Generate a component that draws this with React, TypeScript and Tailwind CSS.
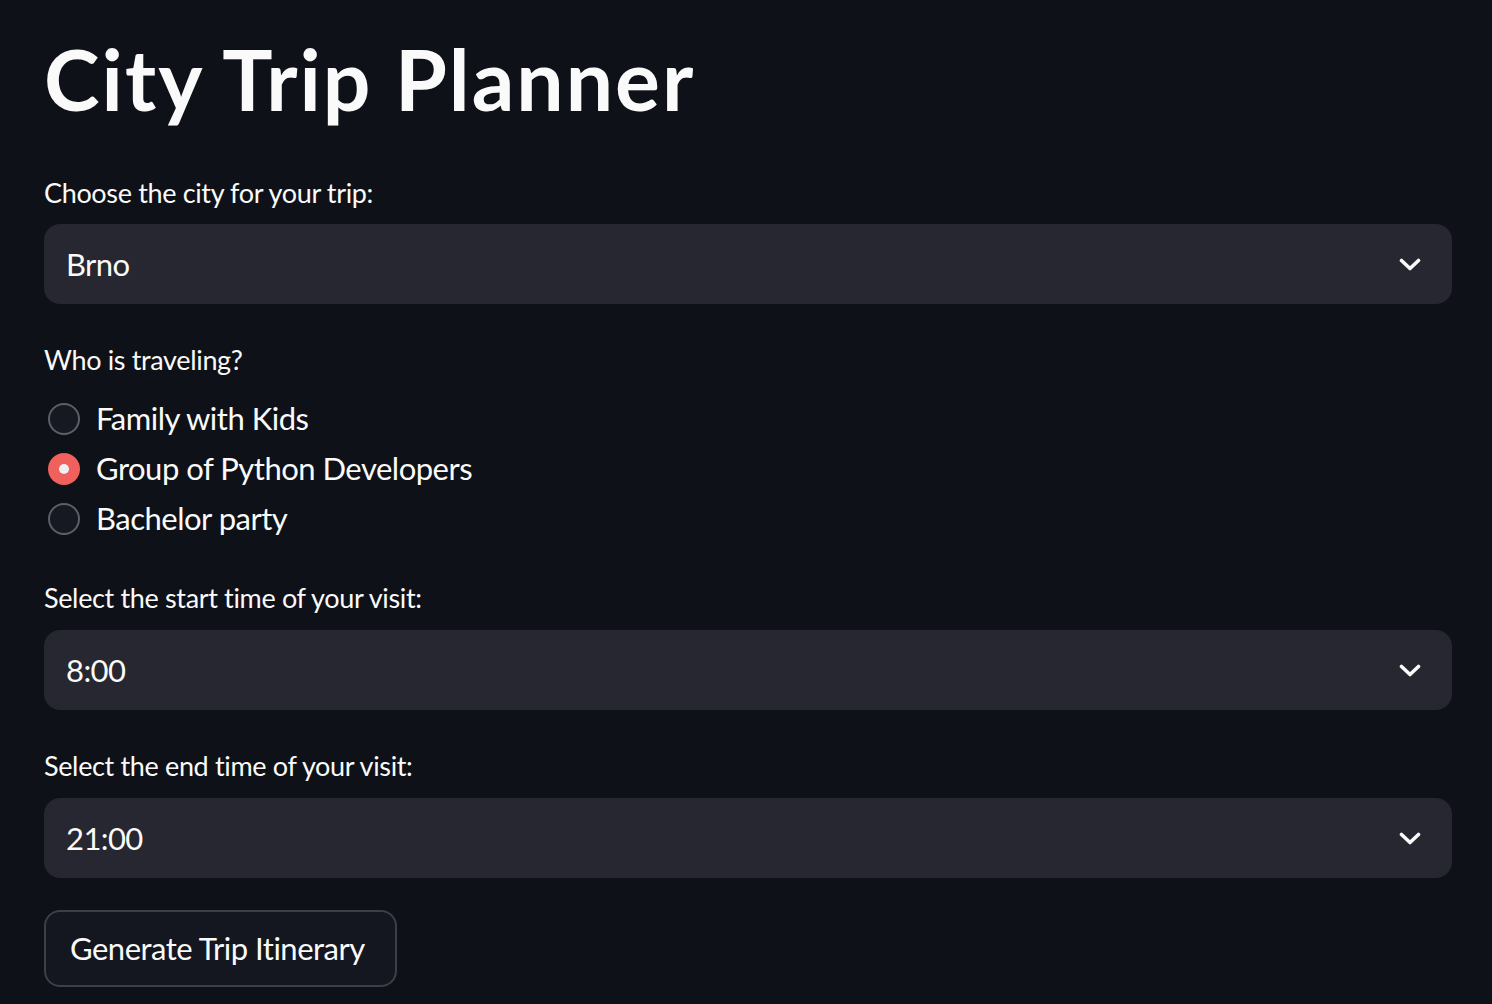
import { useState } from "react";

const cities = ["Brno"];

function Chevron() {
  return (
    <svg width="22" height="13" viewBox="0 0 22 13" fill="none">
      <polyline
        points="2.5,2.5 11,10.5 19.5,2.5"
        stroke="#fafafa"
        strokeWidth="3.6"
        strokeLinecap="round"
        strokeLinejoin="round"
      />
    </svg>
  );
}

function SelectBox({ value }: { value: string }) {
  return (
    <div className="flex h-[80px] w-full items-center justify-between rounded-[16px] bg-[#262730] pl-[22px] pr-[31px]">
      <span className="text-[31px] tracking-[-0.6px] text-[#fafafa]">{value}</span>
      <Chevron />
    </div>
  );
}

function Label({ text, className }: { text: string; className?: string }) {
  return (
    <div className={"h-[40px] text-[27px] leading-[40px] tracking-[-0.35px] text-[#fafafa] " + (className ?? "")}>
      {text}
    </div>
  );
}

export default function App() {
  const [who, setWho] = useState("Group of Python Developers");
  const options = ["Family with Kids", "Group of Python Developers", "Bachelor party"];

  return (
    <div
      className="min-h-screen w-full bg-[#0e1117] pl-[44px] pr-[40px] pt-[26px] text-[#fafafa]"
      style={{ fontFamily: "Lato, 'Noto Sans', sans-serif" }}
    >
      <h1 className="h-[106px] text-[84px] font-bold leading-[106px] tracking-[2px]">City Trip Planner</h1>

      <Label text="Choose the city for your trip:" className="mt-[41px]" />
      <div className="mt-[11px]">
        <SelectBox value={cities[0]} />
      </div>

      <Label text="Who is traveling?" className="mt-[36px]" />
      <div className="mt-[13px] flex flex-col">
        {options.map((o) => {
          const selected = who === o;
          return (
            <div key={o} className="flex h-[50px] cursor-pointer items-center" onClick={() => setWho(o)}>
              <div className="flex w-[52px] shrink-0 items-center pl-[4px] pt-[2px]">
                {selected ? (
                  <div className="flex h-[32px] w-[32px] items-center justify-center rounded-full bg-[#f0605c]">
                    <div className="h-[10px] w-[10px] rounded-full bg-[#eef0f4]" />
                  </div>
                ) : (
                  <div className="h-[32px] w-[32px] rounded-full border-2 border-[#5c5f66] bg-[#161922]" />
                )}
              </div>
              <span className="text-[31px] tracking-[-0.5px] text-[#fafafa]">{o}</span>
            </div>
          );
        })}
      </div>

      <Label text="Select the start time of your visit:" className="mt-[35px]" />
      <div className="mt-[12px]">
        <SelectBox value="8:00" />
      </div>

      <Label text="Select the end time of your visit:" className="mt-[36px]" />
      <div className="mt-[12px]">
        <SelectBox value="21:00" />
      </div>

      <button className="mt-[32px] flex h-[77px] items-center rounded-[16px] border-2 border-[#3c3f46] bg-[#141720] pl-[24px] pr-[30px] text-[31px] tracking-[-0.5px] text-[#fafafa]">
        Generate Trip Itinerary
      </button>
    </div>
  );
}
